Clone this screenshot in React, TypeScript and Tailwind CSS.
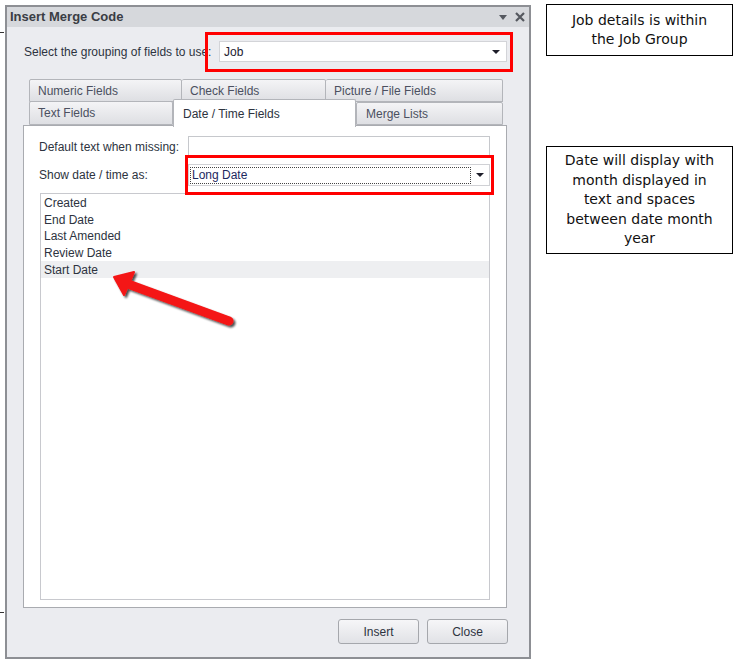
import React from 'react';

const ui = { fontFamily: '"Liberation Sans", Arial, sans-serif' };
const note = { fontFamily: '"DejaVu Sans", "Liberation Sans", sans-serif' };

const Tab: React.FC<{ label: string; w: string; className?: string }> = ({ label, w, className }) => (
  <div
    className={`${w} h-[23px] flex items-center pl-[8px] text-[12px] text-[#4b5060] border border-[#b3b5ba] rounded-t-[2px] bg-gradient-to-b from-[#f4f4f6] to-[#dedfe3] ${className ?? ''}`}
  >
    {label}
  </div>
);

const DropArrow = () => (
  <svg width="8" height="4" viewBox="0 0 8 4" className="shrink-0">
    <path d="M0 0h8L4 4z" fill="#1e1e2a" />
  </svg>
);

const App: React.FC = () => {
  const fields = ['Created', 'End Date', 'Last Amended', 'Review Date', 'Start Date'];

  return (
    <div className="relative w-[733px] h-[661px] bg-white flex" style={ui}>
      {/* stray marks at the left edge */}
      <div className="absolute left-0 top-[32px] w-[4px] h-[1px] bg-[#333]" />
      <div className="absolute left-0 top-[612px] w-[4px] h-[1px] bg-[#333]" />

      {/* dialog window */}
      <div className="ml-[5px] mt-[5px] w-[526px] h-[654px] border-2 border-[#8d8f94] bg-[#ebecf0] flex flex-col">
        <div className="h-[20px] bg-[#d6d8dc] flex items-center justify-between pl-[3px] pr-[4px]">
          <span className="text-[13px] font-bold text-[#3a3d44]">Insert Merge Code</span>
          <div className="flex items-center gap-[8px]">
            <svg width="8" height="5" viewBox="0 0 8 5">
              <path d="M0 0h8L4 5z" fill="#55585f" />
            </svg>
            <svg width="10" height="10" viewBox="0 0 10 10">
              <path d="M1 1l8 8M9 1l-8 8" stroke="#55585f" strokeWidth="2.2" />
            </svg>
          </div>
        </div>

        <div className="flex items-center mt-[14px] pl-[17px]">
          <span className="text-[12px] text-[#2d3340] w-[195px]">Select the grouping of fields to use:</span>
          <div className="w-[288px] h-[21px] bg-white border border-[#d3d4d8] flex items-center justify-between pl-[4px] pr-[6px]">
            <span className="text-[12px] text-[#1c2030]">Job</span>
            <DropArrow />
          </div>
        </div>

        {/* tabs */}
        <div className="mt-[17px] ml-[16px] w-[484px] flex flex-col">
          <div className="flex pl-[6px]">
            <Tab label="Numeric Fields" w="w-[153px]" />
            <Tab label="Check Fields" w="w-[144px]" className="border-l-0" />
            <Tab label="Picture / File Fields" w="w-[177px]" className="border-l-0" />
          </div>
          <div className="flex pl-[6px] -mt-[1px] h-[24px] items-end">
            <Tab label="Text Fields" w="w-[144px]" className="h-[24px]" />
            <div className="relative z-10 w-[183px] h-[28px] -mb-[2px] bg-white border border-[#b3b5ba] border-b-0 flex items-center pl-[9px] text-[12px] text-[#2d3340] rounded-t-[2px]">
              Date / Time Fields
            </div>
            <Tab label="Merge Lists" w="w-[147px]" className="h-[22px] pl-[9px]" />
          </div>

          {/* tab page */}
          <div className="h-[483px] bg-white border border-[#a9abb0] flex flex-col pl-[15px] pr-[16px] pt-[10px]">
            <div className="flex items-center h-[22px]">
              <span className="w-[149px] text-[12px] text-[#2d3340]">Default text when missing:</span>
              <div className="flex-1 h-[22px] border border-[#c6c8cc] bg-white" />
            </div>
            <div className="flex items-center h-[22px] mt-[6px]">
              <span className="w-[149px] text-[12px] text-[#2d3340]">Show date / time as:</span>
              <div className="flex-1 h-[22px] border border-[#d0d1d5] bg-white flex items-center pl-[1px] pr-[5px]">
                <div className="w-[281px] h-[17px] border border-dotted border-[#444] flex items-center pl-[1px] text-[12px] text-[#1c2860]">
                  Long Date
                </div>
                <div className="flex-1 flex justify-end">
                  <DropArrow />
                </div>
              </div>
            </div>
            <div className="mt-[7px] ml-[1px] h-[407px] border border-[#c8c9ce] bg-white pt-[1px]">
              {fields.map((f, i) => (
                <div
                  key={f}
                  className={`h-[16.6px] flex items-center pl-[3px] text-[12px] text-[#2d3340] ${
                    i === fields.length - 1 ? 'bg-[#eeeff1]' : ''
                  }`}
                >
                  {f}
                </div>
              ))}
            </div>
          </div>
        </div>

        {/* buttons */}
        <div className="flex justify-end gap-[8px] mt-[11px] pr-[21px]">
          {['Insert', 'Close'].map((b) => (
            <div
              key={b}
              className="w-[81px] h-[25px] rounded-[3px] border border-[#a5a7ac] bg-gradient-to-b from-[#f6f6f8] to-[#e1e2e6] flex items-center justify-center text-[12px] text-[#2d3340]"
            >
              {b}
            </div>
          ))}
        </div>
      </div>

      {/* annotations */}
      <div className="ml-[15px] mt-[4px] flex flex-col" style={note}>
        <div className="w-[187px] h-[52px] border border-black flex flex-col items-center justify-center text-[14px] leading-[19px] text-[#111]">
          <span>Job details is within</span>
          <span>the Job Group</span>
        </div>
        <div className="mt-[90px] w-[187px] h-[108px] border border-black flex flex-col items-center justify-center text-[14px] leading-[19.5px] text-[#111]">
          <span>Date will display with</span>
          <span>month displayed in</span>
          <span>text and spaces</span>
          <span>between date month</span>
          <span>year</span>
        </div>
      </div>

      {/* red highlight boxes */}
      <div className="absolute left-[205px] top-[32px] w-[308px] h-[40px] border-[3px] border-[#ff0000]" />
      <div className="absolute left-[185px] top-[155px] w-[309px] h-[40px] border-[3px] border-[#ff0000]" />

      {/* red arrow */}
      <svg className="absolute left-[100px] top-[265px]" width="150" height="75" viewBox="100 265 150 75">
        <defs>
          <filter id="sh" x="-20%" y="-20%" width="140%" height="160%">
            <feGaussianBlur in="SourceAlpha" stdDeviation="1.2" />
            <feOffset dx="1.5" dy="2" result="b" />
            <feComponentTransfer>
              <feFuncA type="linear" slope="0.7" />
            </feComponentTransfer>
            <feMerge>
              <feMergeNode />
              <feMergeNode in="SourceGraphic" />
            </feMerge>
          </filter>
        </defs>
        <g filter="url(#sh)">
          <path d="M128 284 L229 321" stroke="#f41414" strokeWidth="9" strokeLinecap="round" />
          <path d="M114 277 L134 272 L124 295 Z" fill="#f41414" stroke="#f41414" strokeWidth="2" strokeLinejoin="round" />
        </g>
      </svg>
    </div>
  );
};

export default App;
